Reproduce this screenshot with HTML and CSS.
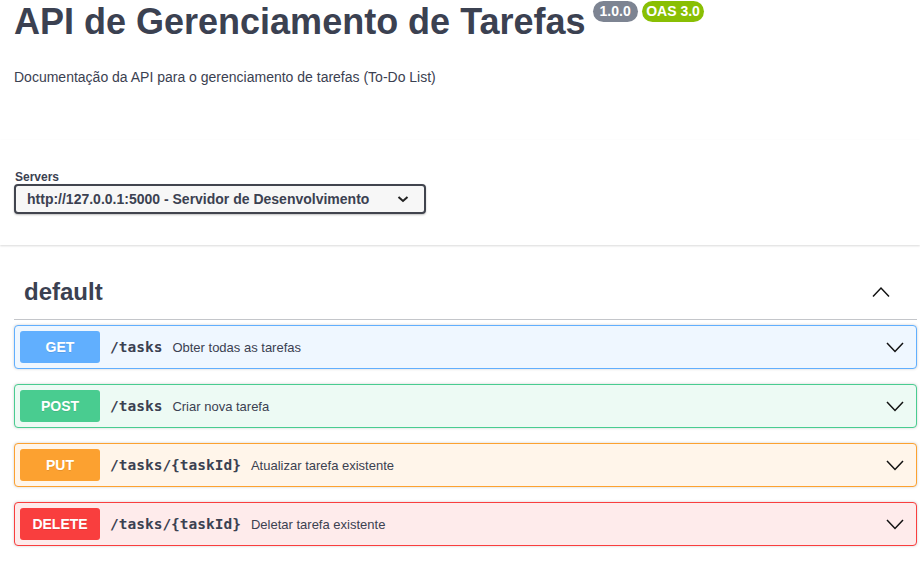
FILE: index.html
```html
<!DOCTYPE html>
<html lang="pt-BR">
<head>
<meta charset="utf-8">
<title>API de Gerenciamento de Tarefas</title>
<link rel="stylesheet" href="styles.css">
</head>
<body>
<div class="page">
  <header class="info wrap">
    <h1 class="title">
      <span class="title-text">API de Gerenciamento de Tarefas</span>
      <span class="badge badge-version">1.0.0</span>
      <span class="badge badge-oas">OAS 3.0</span>
    </h1>
    <p class="desc">Documentação da API para o gerenciamento de tarefas (To-Do List)</p>
  </header>

  <section class="schemes">
    <div class="wrap">
      <label class="servers-label">Servers</label>
      <div class="select">
        <span class="select-text">http://127.0.0.1:5000 - Servidor de Desenvolvimento</span>
        <svg class="select-arrow" width="12" height="8" viewBox="0 0 12 8"><polyline points="1.5,2 6,6 10.5,2" fill="none" stroke="#222" stroke-width="2"/></svg>
      </div>
    </div>
  </section>

  <section class="ops wrap">
    <h3 class="tag">
      <span class="tag-name">default</span>
      <svg class="tag-arrow" width="20" height="20" viewBox="0 0 20 20"><polyline points="2,14.5 10,6 18,14.5" fill="none" stroke="#111" stroke-width="1.5"/></svg>
    </h3>

    <div class="opblock op-get">
      <span class="method">GET</span>
      <span class="path">/tasks</span>
      <span class="summary">Obter todas as tarefas</span>
      <svg class="op-arrow" width="20" height="20" viewBox="0 0 20 20"><polyline points="2,6 10,14.5 18,6" fill="none" stroke="#111" stroke-width="1.5"/></svg>
    </div>

    <div class="opblock op-post">
      <span class="method">POST</span>
      <span class="path">/tasks</span>
      <span class="summary">Criar nova tarefa</span>
      <svg class="op-arrow" width="20" height="20" viewBox="0 0 20 20"><polyline points="2,6 10,14.5 18,6" fill="none" stroke="#111" stroke-width="1.5"/></svg>
    </div>

    <div class="opblock op-put">
      <span class="method">PUT</span>
      <span class="path">/tasks/{taskId}</span>
      <span class="summary">Atualizar tarefa existente</span>
      <svg class="op-arrow" width="20" height="20" viewBox="0 0 20 20"><polyline points="2,6 10,14.5 18,6" fill="none" stroke="#111" stroke-width="1.5"/></svg>
    </div>

    <div class="opblock op-delete">
      <span class="method">DELETE</span>
      <span class="path">/tasks/{taskId}</span>
      <span class="summary">Deletar tarefa existente</span>
      <svg class="op-arrow" width="20" height="20" viewBox="0 0 20 20"><polyline points="2,6 10,14.5 18,6" fill="none" stroke="#111" stroke-width="1.5"/></svg>
    </div>
  </section>
</div>
</body>
</html>
```

FILE: styles.css
```css
* { box-sizing: border-box; }

html, body {
  margin: 0;
  padding: 0;
  background: #fff;
}

body {
  font-family: "Liberation Sans", Arial, sans-serif;
  color: #3b4151;
}

.wrap {
  padding: 0 3px 0 14px;
}

/* Info */
.title {
  margin: 0;
  padding-top: 4px;
  display: flex;
  align-items: flex-start;
  font-size: 36px;
  line-height: 36px;
  font-weight: 700;
  color: #3b4151;
}

.badge {
  margin-top: -3px;
  border-radius: 57px;
  color: #fff;
  font-size: 14px;
  line-height: 17px;
  font-weight: 700;
  padding: 2px 4px;
}

.badge-version {
  background: #7d8492;
  margin-left: 7px;
  padding: 2px 7px;
}

.badge-oas {
  background: #89bf04;
  margin-left: 4px;
  padding: 2px 4.5px;
}

.desc {
  margin: 27px 0 0;
  font-size: 14px;
  line-height: 20px;
  color: #3b4151;
}

/* Servers */
.schemes {
  margin-top: 53px;
  padding: 30px 0 31px;
  background: #fff;
  box-shadow: 0 1px 2px 0 rgba(0, 0, 0, 0.15);
}

.servers-label {
  display: block;
  font-size: 12px;
  line-height: 14px;
  font-weight: 700;
  color: #3b4151;
  padding-left: 1px;
}

.select {
  width: 412px;
  height: 30px;
  display: flex;
  align-items: center;
  padding: 0 15px 0 11px;
  border: 2px solid #41444e;
  border-radius: 4px;
  background: #f7f7f7;
  box-shadow: 0 1px 2px 0 rgba(0, 0, 0, 0.25);
}

.select-text {
  font-size: 14px;
  font-weight: 700;
  color: #3b4151;
  white-space: nowrap;
}

.select-arrow {
  margin-left: auto;
}

/* Operations */
.ops {
  margin-top: 22px;
}

.tag {
  margin: 0 0 5px;
  display: flex;
  align-items: center;
  padding: 10px 26px 12px 10px;
  border-bottom: 1px solid rgba(59, 65, 81, 0.3);
  font-size: 24px;
  line-height: 30px;
  font-weight: 700;
  color: #3b4151;
}

.tag-arrow {
  margin-left: auto;
}

.opblock {
  display: flex;
  align-items: center;
  padding: 5px;
  margin-bottom: 15px;
  border: 1px solid;
  border-radius: 4px;
  box-shadow: 0 0 3px rgba(0, 0, 0, 0.19);
}

.method {
  min-width: 80px;
  padding: 6px 0;
  border-radius: 3px;
  text-align: center;
  font-size: 14px;
  line-height: 20px;
  font-weight: 700;
  color: #fff;
  text-shadow: 0 1px 0 rgba(0, 0, 0, 0.1);
}

.path {
  padding: 0 10px;
  font-family: "DejaVu Sans Mono", "Liberation Mono", monospace;
  font-size: 14.5px;
  font-weight: 700;
  color: #3b4151;
}

.summary {
  font-size: 13px;
  color: #3b4151;
}

.op-arrow {
  margin-left: auto;
  margin-right: 6px;
}

.op-get { border-color: #61affe; background: #eff7ff; }
.op-get .method { background: #61affe; }

.op-post { border-color: #49cc90; background: #edfaf4; }
.op-post .method { background: #49cc90; }

.op-put { border-color: #fca130; background: #fff5ea; }
.op-put .method { background: #fca130; }

.op-delete { border-color: #f93e3e; background: #feebeb; }
.op-delete .method { background: #f93e3e; }
```
